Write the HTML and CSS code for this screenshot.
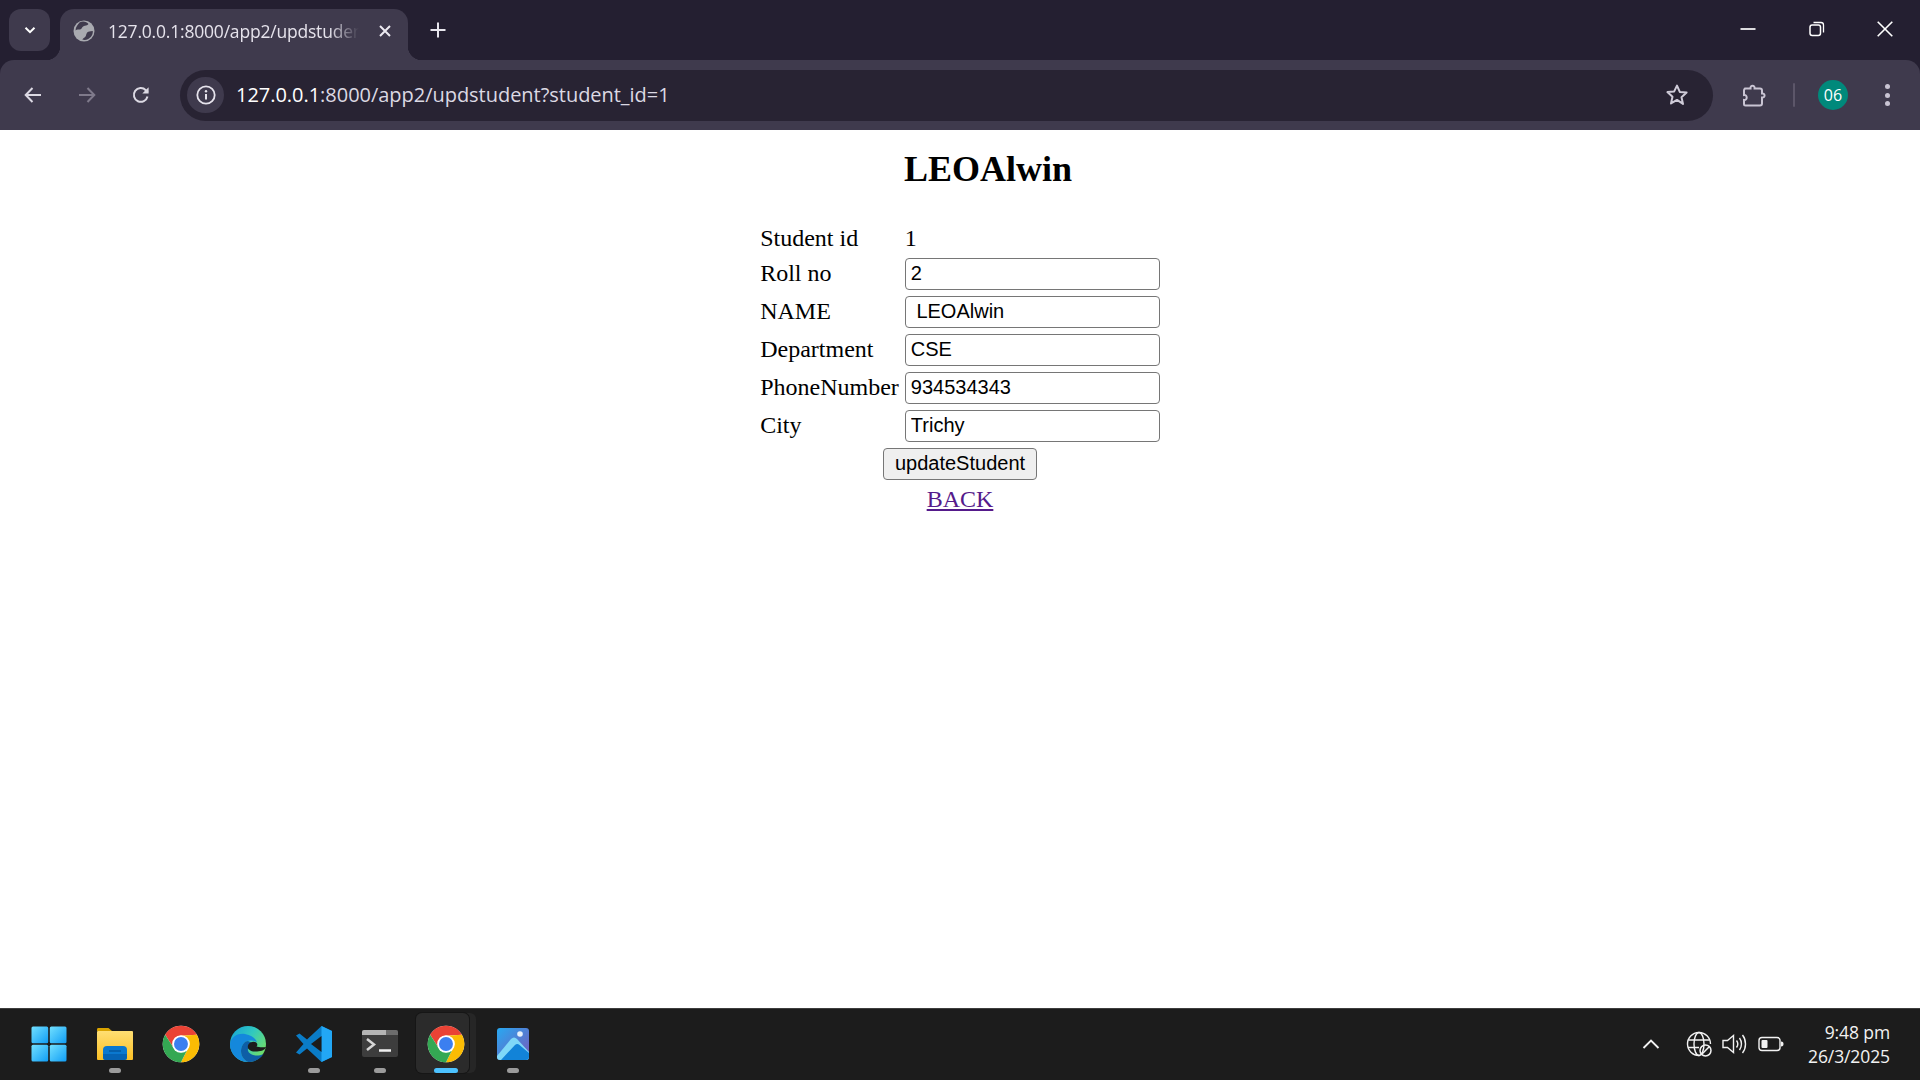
FILE: index.html
```html
<!DOCTYPE html>
<html lang="en">
<head>
<meta charset="utf-8">
<title>127.0.0.1:8000/app2/updstudent</title>
<link rel="stylesheet" href="styles.css">
</head>
<body>
<svg class="defs" width="0" height="0" aria-hidden="true">
  <symbol id="chrome" viewBox="0 0 48 48">
    <circle cx="24" cy="24" r="20" fill="#fff"/>
    <path fill="#ea4335" d="M41.32 14A20 20 0 0 0 6.68 14L16.21 28.5A9 9 0 0 1 24 15Z"/>
    <path fill="#fbbc04" transform="rotate(120 24 24)" d="M41.32 14A20 20 0 0 0 6.68 14L16.21 28.5A9 9 0 0 1 24 15Z"/>
    <path fill="#34a853" transform="rotate(240 24 24)" d="M41.32 14A20 20 0 0 0 6.68 14L16.21 28.5A9 9 0 0 1 24 15Z"/>
    <circle cx="24" cy="24" r="9.6" fill="#fff"/>
    <circle cx="24" cy="24" r="7.6" fill="#3b7ff0"/>
  </symbol>
  <linearGradient id="winG" x1="0" y1="0" x2="1" y2="1"><stop offset="0" stop-color="#72e0ff"/><stop offset="1" stop-color="#109df5"/></linearGradient>
  <linearGradient id="edgeA" x1="0" y1="0" x2="1" y2="0.700"><stop offset="0" stop-color="#14a0d8"/><stop offset="0.500" stop-color="#30c8c0"/><stop offset="1" stop-color="#74e064"/></linearGradient>
  <linearGradient id="photoG" x1="0" y1="0" x2="1" y2="1"><stop offset="0" stop-color="#27a9f2"/><stop offset="1" stop-color="#7a57b8"/></linearGradient>
  <linearGradient id="folderG" x1="0" y1="0" x2="0" y2="1"><stop offset="0" stop-color="#ffdf73"/><stop offset="1" stop-color="#fbbf24"/></linearGradient>
</svg>

<div class="tabstrip">
  <div class="tablist-btn">
    <svg class="ico" width="16" height="16" viewBox="0 0 16 16"><path d="M3.5 5.8 8 10.200l4.500-4.400" fill="none" stroke="#fff" stroke-width="2"/></svg>
  </div>
  <div class="tab">
    <svg class="ico" width="22" height="22" viewBox="0 0 22 22"><circle cx="11" cy="11" r="10.500" fill="#a9aab0"/><path fill="#3f3a4d" d="M7 2.200C10 .8 14 1.800 15.500 4c-1.200 1.800-3.500 1.500-5 2.200-1.700.8-1.500 3-3.500 3.300-1.500.2-3-.2-4.500 1 .2-3.500 2-6 4.500-8.500Z M19.800 11c.3 3.500-1.800 6.500-4.500 8-2.500 1.200-4.500 1-6 .5 1-1.500 2.800-1.800 3.500-3.500.6-1.600.5-3.400 2.500-4.300 1.500-.6 3-.6 4.500-.7Z"/></svg>
    <span class="tab-title">127.0.0.1:8000/app2/updstuden</span>
    <svg class="ico tab-close" width="14" height="14" viewBox="0 0 14 14"><path d="M2 2l10 10M12 2 2 12" stroke="#eceaf1" stroke-width="2"/></svg>
  </div>
  <svg class="ico new-tab" width="18" height="18" viewBox="0 0 18 18"><path d="M9 1.500v15M1.500 9h15" stroke="#e8e6ee" stroke-width="2"/></svg>
  <div class="win-controls">
    <svg class="ico win-min" width="16" height="16" viewBox="0 0 16 16"><path d="M.5 8h15" stroke="#fff" stroke-width="1.700"/></svg>
    <svg class="ico" width="16" height="16" viewBox="0 0 16 16"><rect x="1" y="4" width="10.500" height="10.500" rx="2.200" fill="none" stroke="#fff" stroke-width="1.500"/><path d="M4.500 1.500h7.500a2.500 2.500 0 0 1 2.500 2.500v7.500" fill="none" stroke="#fff" stroke-width="1.300"/></svg>
    <svg class="ico" width="16" height="16" viewBox="0 0 16 16"><path d="M.7.700l14.600 14.600M15.300.700.700 15.300" stroke="#fff" stroke-width="1.600"/></svg>
  </div>
</div>

<div class="toolbar">
  <svg class="ico nav" width="20" height="20" viewBox="0 0 20 20"><path d="M18 10H3M9.500 3 2.700 10l6.800 7" fill="none" stroke="#dcd9e3" stroke-width="2"/></svg>
  <svg class="ico nav" width="20" height="20" viewBox="0 0 20 20"><path d="M2 10h15M10.500 3l6.800 7-6.800 7" fill="none" stroke="#7f7a8b" stroke-width="2"/></svg>
  <svg class="ico nav" width="20" height="20" viewBox="0 0 20 20"><path d="M16.500 11.500a6.900 6.900 0 1 1-1.700-6.300l1.900 2" fill="none" stroke="#dcd9e3" stroke-width="2"/><path d="M17.600 2.200v6.300h-6.300Z" fill="#dcd9e3"/></svg>
  <div class="omnibox">
    <div class="info-chip">
      <svg class="ico" width="20" height="20" viewBox="0 0 20 20"><circle cx="10" cy="10" r="8.700" fill="none" stroke="#e6e3ec" stroke-width="1.800"/><path d="M10 9v5.500" stroke="#e6e3ec" stroke-width="2"/><circle cx="10" cy="6.200" r="1.200" fill="#e6e3ec"/></svg>
    </div>
    <div class="url"><span class="host">127.0.0.1</span>:8000/app2/updstudent?student_id=1</div>
    <svg class="ico star" width="24" height="24" viewBox="0 0 24 24"><path d="M12 2.600l2.800 6.300 6.800.7-5.100 4.600 1.500 6.700L12 16.900l-6 3.500 1.500-6.700-5.100-4.600 6.800-.7Z" fill="none" stroke="#cfcbd8" stroke-width="2" stroke-linejoin="round"/></svg>
  </div>
  <svg class="ico puzzle" width="24" height="26" viewBox="0 0 24 26"><path d="M3 6.500h5.500c-.4-3.800 4.500-3.800 4.100 0H18a2 2 0 0 1 2 2v3c3.400-.4 3.400 4.300 0 4v6a2 2 0 0 1-2 2H3.500c-1 0-1.500-.6-1.500-1.500v-4c3.600.5 3.600-5.500 0-5v-4.500c0-1 .5-1.500 1-2Z" fill="none" stroke="#c9c4d3" stroke-width="2"/></svg>
  <div class="divider"></div>
  <div class="avatar">06</div>
  <div class="dots"><i></i><i></i><i></i></div>
</div>

<main class="page">
  <h2 class="title">LEOAlwin</h2>
  <form class="form">
    <table class="student-table">
      <tr><td>Student id</td><td class="value">1</td></tr>
      <tr><td>Roll no</td><td><input type="text" value="2"></td></tr>
      <tr><td>NAME</td><td><input type="text" value=" LEOAlwin"></td></tr>
      <tr><td>Department</td><td><input type="text" value="CSE"></td></tr>
      <tr><td>PhoneNumber</td><td><input type="text" value="934534343"></td></tr>
      <tr><td>City</td><td><input type="text" value="Trichy"></td></tr>
      <tr><td colspan="2" class="center"><button type="button">updateStudent</button></td></tr>
      <tr><td colspan="2" class="center"><a href="#back" class="back">BACK</a></td></tr>
    </table>
  </form>
</main>

<footer class="taskbar">
  <div class="apps">
    <div class="app">
      <svg width="36" height="36" viewBox="0 0 36 36"><rect x="0.500" y="0.500" width="16.700" height="16.700" rx="1.500" fill="url(#winG)"/><rect x="18.800" y="0.500" width="16.700" height="16.700" rx="1.500" fill="url(#winG)"/><rect x="0.500" y="18.800" width="16.700" height="16.700" rx="1.500" fill="url(#winG)"/><rect x="18.800" y="18.800" width="16.700" height="16.700" rx="1.500" fill="url(#winG)"/></svg>
    </div>
    <div class="app open">
      <svg width="36" height="36" viewBox="0 0 36 36"><path d="M0 3.500C0 2.500.6 2 1.500 2h10l3.500 3h-15Z" fill="#d9a300"/><rect x="0" y="5" width="36" height="29" rx="1" fill="url(#folderG)"/><rect x="6" y="20" width="24" height="14" rx="4" fill="#0a78cf"/><path d="M6 28h24v4a2 2 0 0 1-2 2H8a2 2 0 0 1-2-2Z" fill="#0563b4"/><path d="M12 25h12" stroke="#0458a0" stroke-width="1.500"/></svg>
    </div>
    <div class="app"><svg width="44" height="44"><use href="#chrome"/></svg></div>
    <div class="app">
      <svg width="36" height="36" viewBox="0 0 36 36"><circle cx="18" cy="18" r="18" fill="url(#edgeA)"/><path d="M0 18C1 10 9 7 15 8c6 1 10 4 12 8-4-2-10-2-13 1-4 4-4 12 0 16 1.500 1.500 3 2.500 4 3C8 36 0 28 0 18Z" fill="#1488dc"/><path d="M14 17c-4 4-4 12 0 16 1.500 1.500 3 2.500 4 3 7 0 12-3 15.500-8-5 2.500-11 2-14-1-2-2-2-4-1-5 3-3 6-5-.5-7-1.500 0-3 .8-4 2Z" fill="#0e5ea6"/><path d="M36 21c-1 3-4 4-9 4.500-4 .4-7-.5-8.500-2.500-1.500-2.500-.5-5 2-6.500 2.500-1.300 5.500-1 6.500 1 .5 1 .5 2-.5 3 1.500.5 5.500 1 9.500.5Z" fill="#1c1c1c"/></svg>
    </div>
    <div class="app open">
      <svg width="36" height="36" viewBox="0 0 36 36"><path d="M25.500 0 36 5v26l-10.500 5L11 22.500 3.500 28.500 0 26.500 7.500 18 0 9.500 3.500 7.500 11 13.500Z" fill="#0a7cc7"/><path d="M25.500 0 36 5v26l-10.500 5Z" fill="#22a7f5"/><path d="M25.500 10 15 18l10.500 8Z" fill="#1c1c1c"/></svg>
    </div>
    <div class="app open">
      <svg width="36" height="28" viewBox="0 0 36 28"><rect width="36" height="27" rx="2" fill="#3d3d3d"/><path d="M2 0h22v5H0V2a2 2 0 0 1 2-2Z" fill="#b5b5b5"/><path d="M24 0h10a2 2 0 0 1 2 2v3H24Z" fill="#6d6d6d"/><path d="M5 9l7 5.500-7 5.500" fill="none" stroke="#d6d6d6" stroke-width="2.500"/><path d="M17 20.500h12" stroke="#f0f0f0" stroke-width="2.500"/></svg>
    </div>
    <div class="app active">
      <div class="stack"></div>
      <div class="stack-front"></div>
      <svg class="over" width="44" height="44"><use href="#chrome"/></svg>
    </div>
    <div class="app open">
      <svg width="32" height="32" viewBox="0 0 32 32"><rect width="32" height="32" rx="3" fill="url(#photoG)"/><circle cx="23" cy="6" r="2.800" fill="#e8f1fb"/><path d="M0 28 14 11c2-2 4-2 6 0l12 13v5a3 3 0 0 1-3 3H3a3 3 0 0 1-3-3Z" fill="#7fd8f8"/><path d="M4 32 18 17c1.500-1.300 3-1.300 4.500 0L32 25v4a3 3 0 0 1-3 3Z" fill="#1283d8"/></svg>
    </div>
  </div>
  <div class="tray">
    <svg class="ico chev" width="18" height="12" viewBox="0 0 18 12"><path d="M1.500 10 9 2.500 16.500 10" fill="none" stroke="#f2f2f2" stroke-width="1.900"/></svg>
    <svg class="ico" width="26" height="26" viewBox="0 0 26 26"><g fill="none" stroke="#f2f2f2" stroke-width="1.400"><path d="M13.500 24.500A11.500 11.500 0 1 1 24.500 13"/><ellipse cx="13" cy="13" rx="5" ry="11.500"/><path d="M2.500 9h21M2 16.500h11"/><circle cx="19.500" cy="19.500" r="5.500" stroke-width="1.500"/><path d="M15.800 23.200l7.400-7.400" stroke-width="1.500"/></g></svg>
    <svg class="ico" width="26" height="24" viewBox="0 0 26 24"><g fill="none" stroke="#f2f2f2" stroke-width="1.400"><path d="M1 8.500h4.500L11.500 3.500v17l-6-5H1Z"/><path d="M14.500 8.500c1.500 2 1.500 5 0 7M17.500 6c2.600 3.500 2.600 8.500 0 12M20.500 3c4 5 4 13 0 18"/></g></svg>
    <svg class="ico" width="26" height="16" viewBox="0 0 26 16"><rect x="1" y="1.500" width="21" height="13" rx="3" fill="none" stroke="#f2f2f2" stroke-width="1.400"/><rect x="3.500" y="4" width="6" height="8" rx="1" fill="#f2f2f2"/><path d="M23 5.500c2 0 2.500 1 2.500 2.500s-.5 2.500-2.500 2.500Z" fill="#f2f2f2"/></svg>
    <div class="clock"><div>9:48 pm</div><div>26/3/2025</div></div>
  </div>
</footer>
</body>
</html>
```
FILE: styles.css
```css
html, body { margin: 0; height: 100%; }
body {
  display: flex;
  flex-direction: column;
  height: 100vh;
  overflow: hidden;
  background: #241f31;
  font-family: "Liberation Serif", serif;
  color: #000;
}
.defs { position: absolute; }
.ico { display: block; flex: none; }

.tabstrip {
  height: 60px;
  flex: none;
  display: flex;
  align-items: flex-end;
  background: #241f31;
  position: relative;
}
.tablist-btn {
  width: 41px;
  height: 42px;
  margin: 0 10px 9px 9px;
  border-radius: 12px;
  background: #3f3a4d;
  display: flex;
  align-items: center;
  justify-content: center;
}
.tab {
  width: 348px;
  height: 51px;
  box-sizing: border-box;
  padding: 0 16px 7px 13px;
  background: #3f3a4d;
  border-radius: 14px 14px 0 0;
  display: flex;
  align-items: center;
  position: relative;
}
.tab::before, .tab::after {
  content: "";
  position: absolute;
  bottom: 0;
  width: 14px;
  height: 14px;
}
.tab::before { left: -14px; background: radial-gradient(circle at 0 0, transparent 14px, #3f3a4d 14.500px); }
.tab::after { right: -14px; background: radial-gradient(circle at 100% 0, transparent 14px, #3f3a4d 14.500px); }
.tab-title {
  flex: 1;
  min-width: 0;
  margin-left: 13px;
  white-space: nowrap;
  font: 17.500px "Open Sans", sans-serif;
  letter-spacing: -0.200px;
  color: #e6e3ec;
  -webkit-mask-image: linear-gradient(90deg, #000 88%, transparent 100%);
  mask-image: linear-gradient(90deg, #000 88%, transparent 100%);
}
.tab-close { margin-left: 19px; }
.new-tab { margin: 0 0 21px 21px; }
.win-controls {
  margin-left: auto;
  height: 58px;
  align-self: flex-start;
  display: flex;
  align-items: center;
  gap: 52px;
  padding-right: 27px;
}
.win-min { margin-right: 1px; }

.toolbar {
  height: 70px;
  flex: none;
  box-sizing: border-box;
  background: #3f3a4d;
  border-radius: 14px 14px 0 0;
  display: flex;
  align-items: center;
  padding: 0 23px 0 23px;
  position: relative;
}
.nav { margin-right: 34px; }
.nav:nth-child(3) { margin-right: 29px; }
.omnibox {
  width: 1533px;
  height: 51px;
  flex: none;
  box-sizing: border-box;
  background: #282333;
  border-radius: 26px;
  display: flex;
  align-items: center;
  padding: 0 24px 0 7px;
}
.info-chip {
  width: 37px;
  height: 36px;
  border-radius: 18px;
  background: #3f3a4d;
  display: flex;
  align-items: center;
  justify-content: center;
}
.url {
  flex: 1;
  margin: 0 0 2px 12px;
  font: 20px "Open Sans", sans-serif;
  letter-spacing: -0.030px;
  color: #dcd9e3;
  white-space: nowrap;
}
.host { color: #fff; }
.puzzle { margin-left: 29px; }
.divider { width: 2px; height: 24px; margin: 0 23px 0 27px; background: #5c5669; border-radius: 1px; }
.avatar {
  width: 30px;
  height: 30px;
  border-radius: 50%;
  background: #00897b;
  color: #fff;
  font: 16px/30px "Open Sans", sans-serif;
  text-align: center;
}
.dots { margin-left: 37px; display: flex; flex-direction: column; gap: 3.400px; }
.dots i { display: block; width: 5px; height: 5px; border-radius: 50%; background: #c9c4d3; }

.page { flex: 1; min-height: 0; background: #fff; }
.title {
  margin: 0;
  padding: 19px 0 0 56px;
  text-align: center;
  font-size: 36px;
  font-weight: bold;
  line-height: 41px;
}
.form { margin: 30px 0 0; }
.student-table {
  margin: 0 auto;
  border-collapse: separate;
  border-spacing: 3px;
  font-size: 24px;
}
.student-table td { padding: 1.500px; }
.center { text-align: center; }
.value { padding-left: 3px; }
input {
  display: block;
  box-sizing: border-box;
  width: 255px;
  height: 32px;
  padding: 1.500px 3px 1.500px 5px;
  margin: 0;
  border: 1.500px solid #767676;
  border-radius: 4px;
  background: #fff;
  color: #000;
  font: 20px "Liberation Sans", sans-serif;
  white-space: pre;
}
button {
  box-sizing: border-box;
  width: 154px;
  height: 32px;
  padding: 0;
  border: 1.500px solid #767676;
  border-radius: 4px;
  background: #efefef;
  color: #000;
  font: 20px "Liberation Sans", sans-serif;
  vertical-align: top;
}
.back { color: #551a8b; text-decoration: underline; }

.taskbar {
  height: 72px;
  flex: none;
  box-sizing: border-box;
  border-top: 1.500px solid #3d3d3d;
  background: #1c1c1c;
  display: flex;
  align-items: center;
  justify-content: space-between;
  padding: 0 30px 0 15.500px;
}
.apps { display: flex; align-items: center; height: 100%; }
.app {
  width: 66.300px;
  height: 100%;
  box-sizing: border-box;
  padding-bottom: 2px;
  display: flex;
  align-items: center;
  justify-content: center;
  position: relative;
}
.open::after, .active::after {
  content: "";
  position: absolute;
  left: 50%;
  bottom: 7.500px;
  width: 12px;
  height: 5px;
  margin-left: -6px;
  border-radius: 3px;
  background: #9b9b9b;
}
.active::after { width: 24px; margin-left: -12px; background: #4cc2ff; }
.stack {
  position: absolute;
  left: 10px; top: 4px;
  width: 53px; height: 60px;
  border-radius: 6px;
  background: #262626;
}
.stack-front {
  position: absolute;
  left: 3px; top: 4px;
  width: 53px; height: 60px;
  border-radius: 6px;
  background: #2b2b2b;
  box-shadow: 0 0 0 1px #161616;
}
.over { position: relative; }
.tray { display: flex; align-items: center; margin-bottom: 2px; }
.chev { margin-right: 26px; }
.tray .ico + .ico { margin-right: 10px; }
.clock {
  width: 82px;
  margin-left: 14px;
  text-align: right;
  color: #f2f2f2;
  font: 17.500px/24px "Open Sans", sans-serif;
  letter-spacing: -0.100px;
  white-space: nowrap;
}
```
